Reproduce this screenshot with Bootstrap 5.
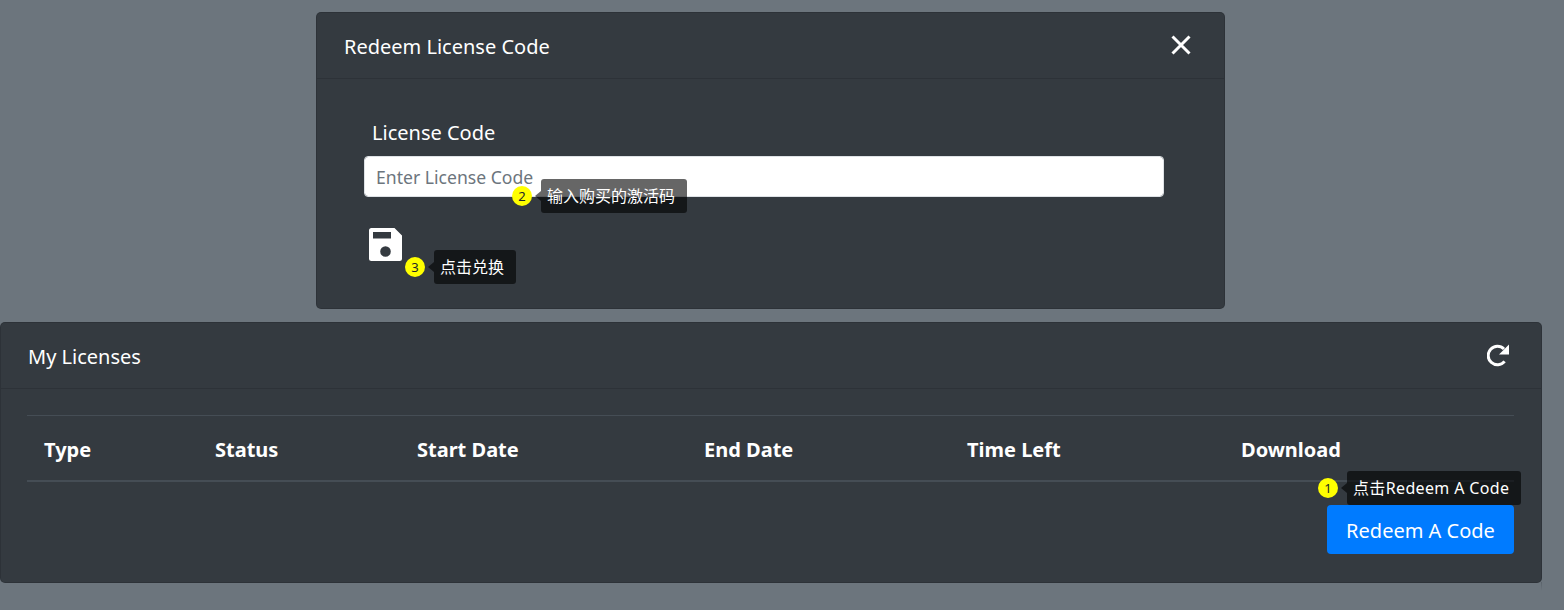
<!DOCTYPE html>
<html lang="en">
<head>
<meta charset="utf-8">
<title>Licenses</title>
<link href="https://cdn.jsdelivr.net/npm/bootstrap@5.3.0/dist/css/bootstrap.min.css" rel="stylesheet">
<style>
html, body { height: 100%; }
body { background: #6c757d; font-family: "Noto Sans", "Noto Sans CJK SC", sans-serif; overflow: hidden; color: #fff; }
.lic-page { padding-top: 12px; }
.lic-card { background: #343a40; border: 1px solid rgba(0,0,0,.125); border-radius: 5px; color: #fff; position: relative; }
.lic-redeem { width: 909px; margin-left: 316px; height: 297px; }
.lic-list { width: 1542px; margin-top: 13px; height: 261px; }
.lic-list::after { content: ""; position: absolute; right: -1px; top: 259px; width: 1px; height: 9px; background: linear-gradient(#5a626a, #6c757d); }
.lic-head { background: transparent; border-bottom: 1px solid rgba(0,0,0,.125); display: flex; justify-content: space-between; align-items: center; padding: 2px 31px 0 27px; height: 66px; font-size: 20px; line-height: 24px; }
.lic-redeem .lic-head { padding-right: 33px; }
.lic-iconbtn { background: none; border: 0; padding: 0 0 2px; line-height: 0; color: #fff; }
.lic-redeem .lic-iconbtn { padding-bottom: 4px; }
.lic-label { font-size: 20px; line-height: 24px; padding-left: 55px; padding-top: 42px; margin-bottom: 11px; display: block; }
.lic-input { width: 800px; margin-left: 47px; height: 41px; font-size: 17.6px; padding: 0 11px; border-radius: 4px; font-family: inherit; }
.lic-input::placeholder { color: #6c757d; }
.lic-save { margin: 31px 0 0 52px; line-height: 0; }
.lic-body { padding: 26px 27px 0 26px; }
.lic-table { width: 1487px; margin: 0; table-layout: fixed; color: #fff; --bs-table-bg: transparent; --bs-table-color: #fff; }
.lic-table th { font-size: 20px; font-weight: 700; line-height: 24px; padding: 22px 0 18px 17px; border-top: 1px solid #454d55; border-bottom: 2px solid #454d55; }
.lic-action { display: flex; justify-content: flex-end; margin-top: 23px; }
.lic-btn { background: #007bff; border: 0; color: #fff; font-size: 20px; line-height: 24px; width: 187px; height: 49px; border-radius: 4px; padding: 2px 0 0; }
.lic-tip { position: absolute; height: 34px; line-height: 35px; padding: 0 6px; background: rgba(0,0,0,.6); border-radius: 3px; font-size: 16px; white-space: nowrap; color: #fff; }
.lic-tip::before { content: ""; position: absolute; left: -6px; top: 12px; border: 5px solid transparent; border-left-width: 0; border-right: 6px solid rgba(0,0,0,.6); }
.lic-dot { position: absolute; width: 20px; height: 20px; border-radius: 50%; background: #ff0; color: #212529; font-size: 13px; line-height: 20px; text-align: center; }
.tip-a { left: 1347px; top: 471px; width: 174px; letter-spacing: .35px; }
.dot-a { left: 1318px; top: 478px; }
.tip-b { left: 541px; top: 179px; width: 146px; }
.dot-b { left: 512px; top: 186px; }
.tip-c { left: 434px; top: 250px; width: 82px; }
.dot-c { left: 405px; top: 257px; }
</style>
</head>
<body>
<div class="lic-page">
  <section class="lic-card lic-redeem">
    <header class="lic-head">
      <span>Redeem License Code</span>
      <button class="lic-iconbtn" type="button" aria-label="Close">
        <svg width="20" height="20" viewBox="0 0 20 20"><path d="M1.500 1.500 18.500 18.500M18.500 1.500 1.500 18.500" stroke="#fff" stroke-width="3" fill="none"/></svg>
      </button>
    </header>
    <form>
      <label class="lic-label" for="code">License Code</label>
      <input id="code" class="form-control lic-input" placeholder="Enter License Code">
      <div class="lic-save">
        <svg width="33" height="33" viewBox="0 0 33 33"><path fill="#fff" fill-rule="evenodd" d="M2.5 0H25.5L33 7.500V30.500A2.500 2.500 0 0 1 30.500 33H2.500A2.500 2.500 0 0 1 0 30.500V2.500A2.500 2.500 0 0 1 2.500 0ZM4 4V10.500H22V4ZM11.200 23.500A5.300 5.300 0 1 0 21.800 23.500A5.300 5.300 0 1 0 11.200 23.500Z"/></svg>
      </div>
    </form>
  </section>
  <section class="lic-card lic-list">
    <header class="lic-head">
      <span>My Licenses</span>
      <button class="lic-iconbtn" type="button" aria-label="Refresh">
        <svg width="23" height="23" viewBox="0 0 23 23"><path d="M17 5A9.250 9.250 0 1 0 17.600 17.400" fill="none" stroke="#fff" stroke-width="3"/><path fill="#fff" d="M22 .5V10.500H12Z"/></svg>
      </button>
    </header>
    <div class="lic-body">
      <table class="table lic-table">
        <colgroup><col style="width:171px"><col style="width:202px"><col style="width:287px"><col style="width:263px"><col style="width:274px"><col style="width:290px"></colgroup>
        <thead><tr><th>Type</th><th>Status</th><th>Start Date</th><th>End Date</th><th>Time Left</th><th>Download</th></tr></thead>
      </table>
      <div class="lic-action"><button class="lic-btn" type="button">Redeem A Code</button></div>
    </div>
  </section>
</div>
<span class="lic-dot dot-a">1</span><span class="lic-tip tip-a">点击Redeem A Code</span>
<span class="lic-dot dot-b">2</span><span class="lic-tip tip-b">输入购买的激活码</span>
<span class="lic-dot dot-c">3</span><span class="lic-tip tip-c">点击兑换</span>
<script src="https://cdn.jsdelivr.net/npm/bootstrap@5.3.0/dist/js/bootstrap.bundle.min.js"></script>
</body>
</html>
